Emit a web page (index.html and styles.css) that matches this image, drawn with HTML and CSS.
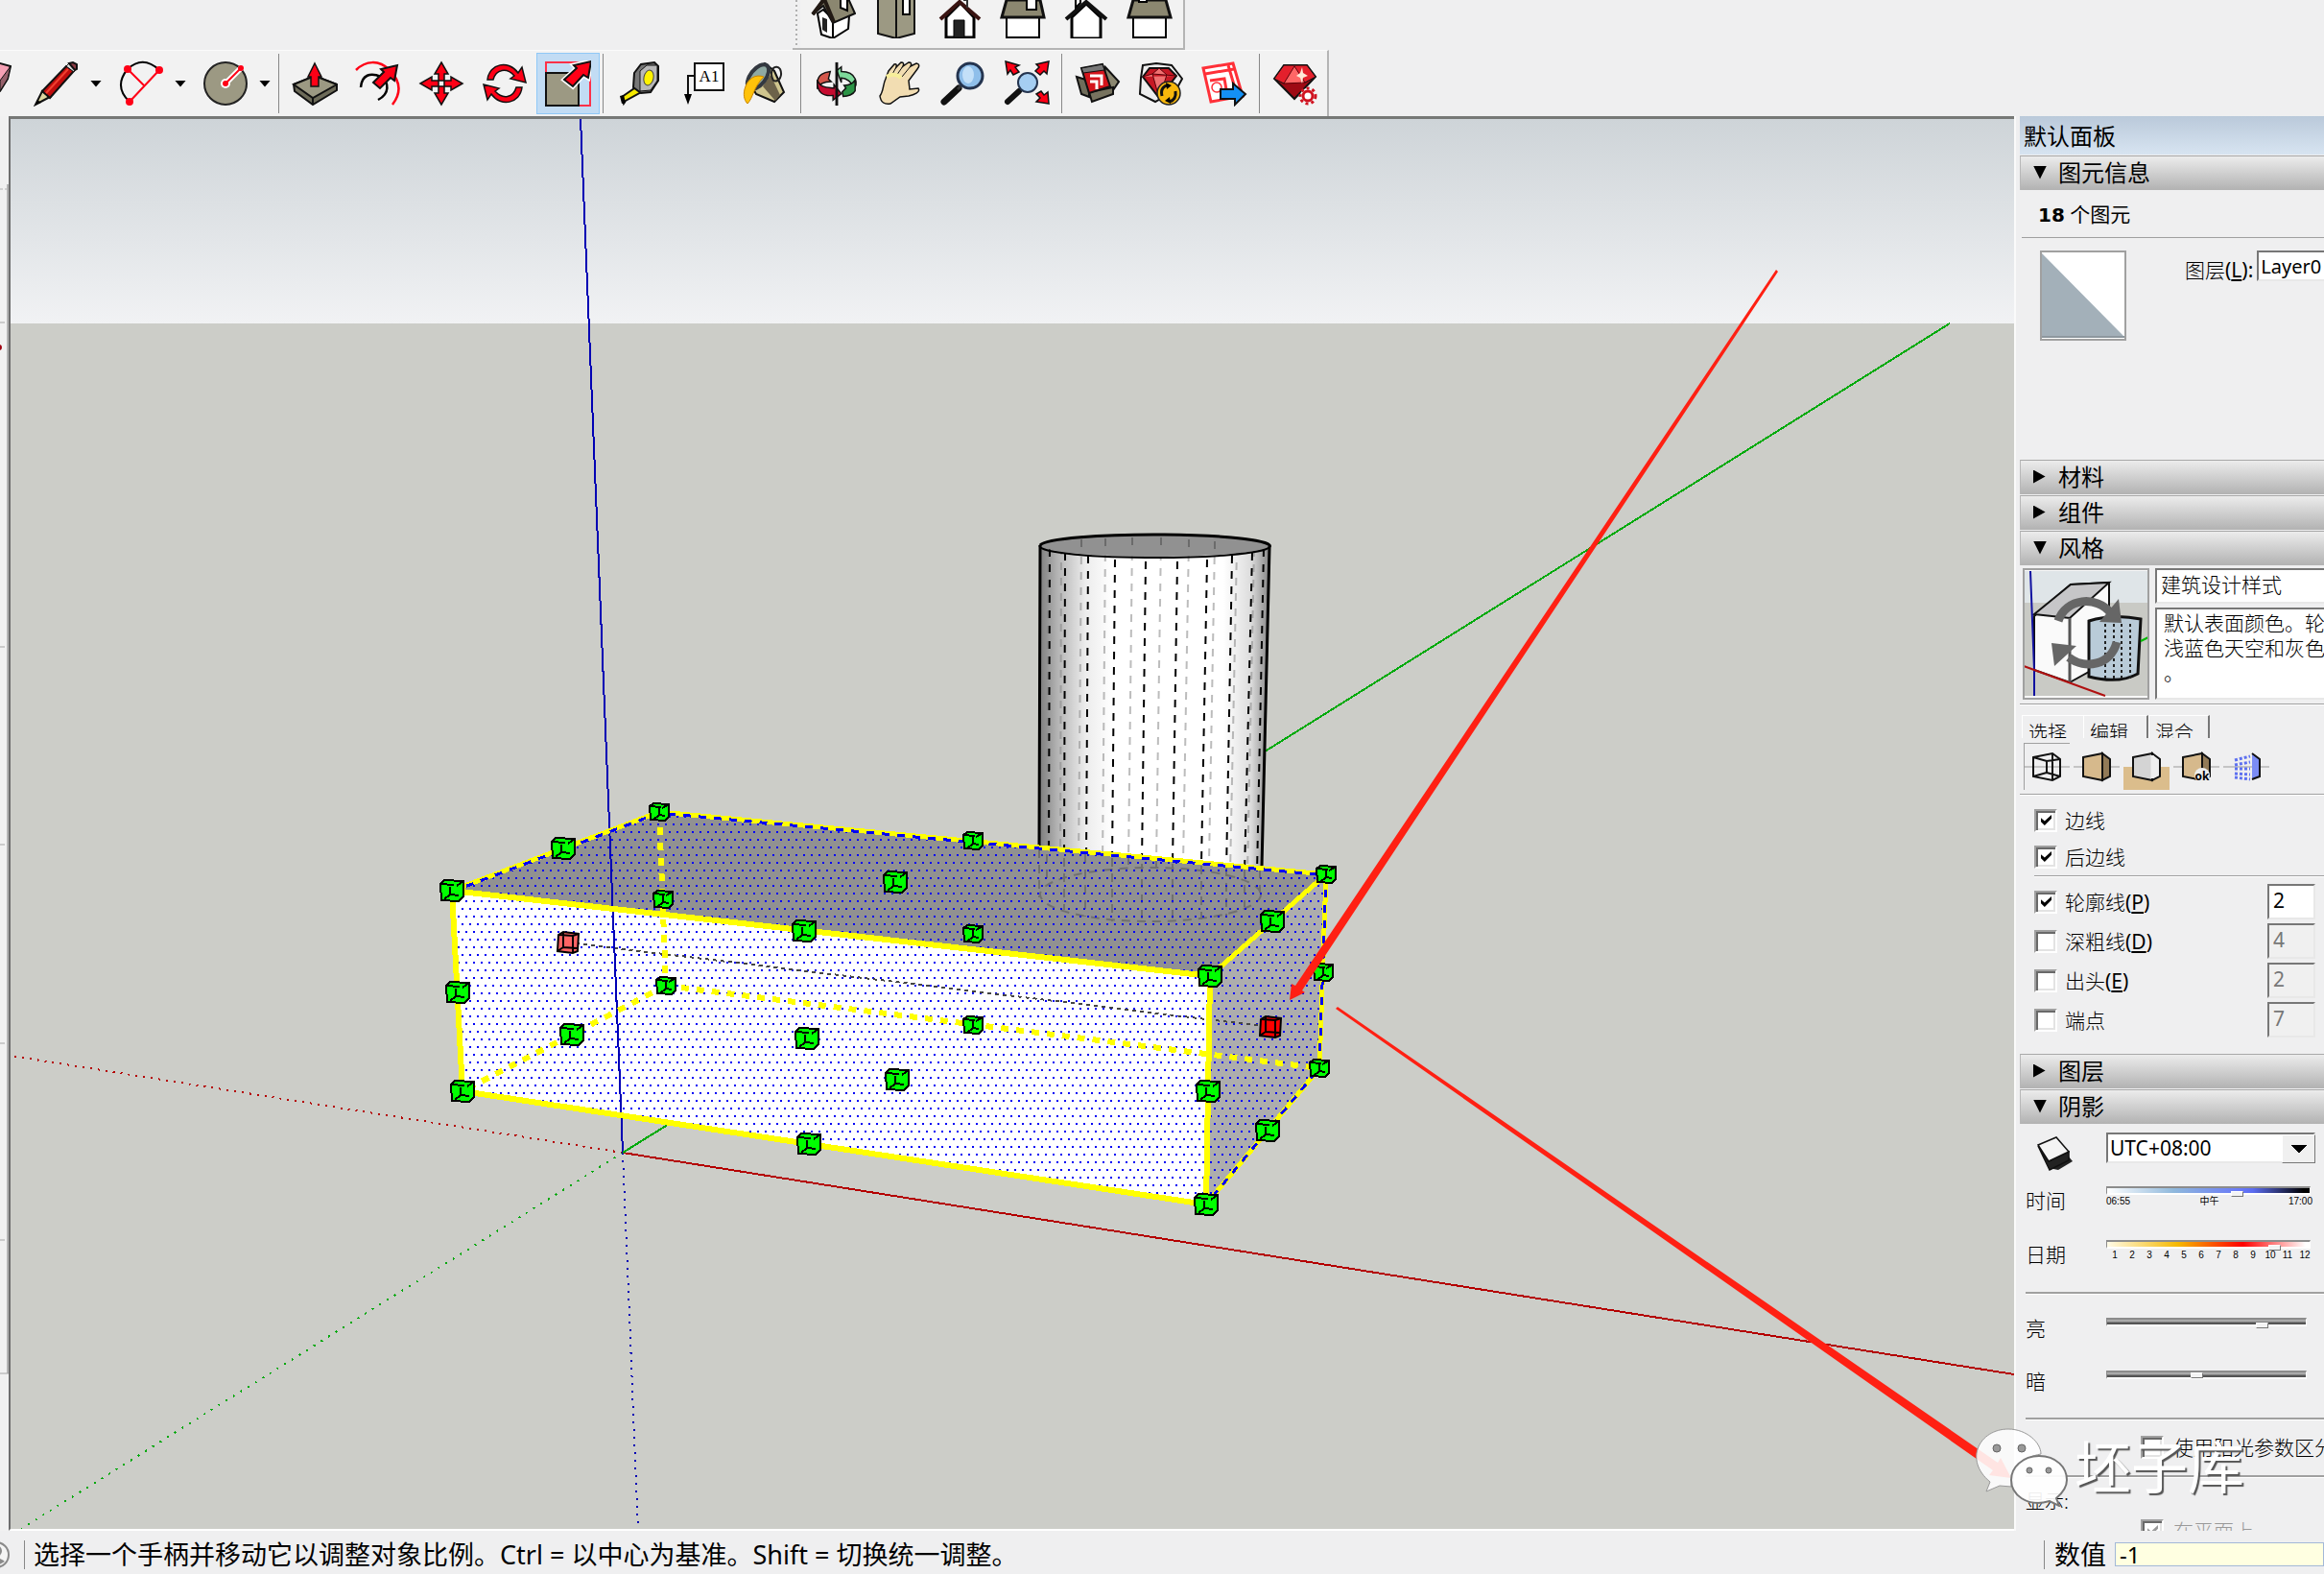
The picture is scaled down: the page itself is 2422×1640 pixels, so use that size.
FILE: index.html
```html
<!DOCTYPE html>
<html lang="zh-CN">
<head>
<meta charset="utf-8">
<title>SketchUp</title>
<link rel="stylesheet" href="styles.css">
</head>
<body>
<div class="app">
<header class="toolbars">
  <div class="bar bar-views">
    <button class="tool" aria-label="等轴"><svg viewBox="844 -10 48 48"><path d="M852 12L856 34L868 38V18L858 8Z" fill="#fff" stroke="#000" stroke-width="2"/><path d="M868 19L885 14L884 28L868 38Z" fill="#fff" stroke="#000" stroke-width="2"/><path d="M857 16l5 2v14l-5-3z" fill="#222"/><path d="M847 13L860-6L882-8L891 12L868 22L858 4Z" fill="#8b8770" stroke="#111" stroke-width="2"/><path d="M847 13L859-3L869 21" fill="none" stroke="#221a14" stroke-width="4"/><path d="M876-8v14l7 3v-16z" fill="#fff" stroke="#000" stroke-width="2"/></svg></button>
    <button class="tool" aria-label="俯视图"><svg viewBox="910 -10 48 48"><path d="M915-10V33L934 38L953 33V-10Z" fill="#9c9983" stroke="#111" stroke-width="2"/><path d="M934-10V38" stroke="#111" stroke-width="2"/><path d="M941-6H948V13H941Z" fill="#fff" stroke="#000" stroke-width="2"/></svg></button>
    <button class="tool" aria-label="前视图"><svg viewBox="976 -10 48 48"><path d="M986 16V37H1015V16L1001 1Z" fill="#fff" stroke="#000" stroke-width="3"/><path d="M980 18L1000 0L1021 18" fill="none" stroke="#3a1412" stroke-width="4"/><path d="M994 19H1005V37H994Z" fill="#222" stroke="#000"/><path d="M1004-2h4v8" fill="none" stroke="#333" stroke-width="2"/></svg></button>
    <button class="tool" aria-label="右视图"><svg viewBox="1042 -10 48 48"><path d="M1049 16H1083V37H1049Z" fill="#fff" stroke="#000" stroke-width="2"/><path d="M1049-2H1084L1088 16H1044Z" fill="#8b8770" stroke="#111" stroke-width="3"/><path d="M1070-9H1080V8H1070Z" fill="#fff" stroke="#000" stroke-width="2"/></svg></button>
    <button class="tool" aria-label="后视图"><svg viewBox="1108 -10 48 48"><path d="M1117 16V38H1147V16L1132 2Z" fill="#fff" stroke="#000" stroke-width="3"/><path d="M1111 18L1132 0L1153 18" fill="none" stroke="#111" stroke-width="4"/><path d="M1121-8v14l5-5v-10" fill="#fff" stroke="#000" stroke-width="2"/></svg></button>
    <button class="tool" aria-label="左视图"><svg viewBox="1174 -10 48 48"><path d="M1181 16H1215V37H1181Z" fill="#fff" stroke="#000" stroke-width="2"/><path d="M1181-2H1215L1220 16H1176Z" fill="#8b8770" stroke="#111" stroke-width="3"/><path d="M1187-9H1195V0H1187Z" fill="#fff" stroke="#000" stroke-width="2"/></svg></button>
  </div>
  <div class="bar bar-main">
    <button class="tool eraser" aria-label="擦除"><svg viewBox="-36 63 48 48"><path d="M-20 90L-4 65L11 69L8 82L0 95L-18 104Z" fill="#f6a1b5" stroke="#111" stroke-width="2"/><path d="M11 69L8 82L0 95V84Z" fill="#96606b" stroke="#111"/></svg></button>
    <button class="tool" aria-label="直线"><svg viewBox="35 63 48 48"><path d="M37 109L44 95L52 101Z" fill="#ddd6a0" stroke="#111" stroke-width="2"/><path d="M37 109l2-5 4 3z"/><path d="M44 95L69 69L77 74L52 102Z" fill="#c00d0d" stroke="#111" stroke-width="2"/><path d="M48 97L71 72" stroke="#f04030" stroke-width="2"/><path d="M69 69l3-3 7 6-2 3z" fill="#ddd" stroke="#111"/><path d="M72 66l4-1 4 2v5l-2 1z" fill="#8d3b44" stroke="#111" stroke-width="2"/></svg></button><button class="more" aria-label="直线选项"></button>
    <button class="tool" aria-label="圆弧"><svg viewBox="123 63 48 48"><path d="M133 72Q149 57 166 73M133 72Q118 90 135 106" fill="none" stroke="#000" stroke-width="2"/><path d="M133 72L150 89M166 73L135 106" stroke="#ff0016" stroke-width="2"/><g fill="#ff0016"><circle cx="133" cy="72" r="4"/><circle cx="166" cy="73" r="4"/><circle cx="135" cy="106" r="4"/></g></svg></button><button class="more" aria-label="圆弧选项"></button>
    <button class="tool" aria-label="圆"><svg viewBox="210 63 48 48"><circle cx="234" cy="87" r="22" fill="#9c9983" stroke="#222" stroke-width="2"/><path d="M234 87L250 71" stroke="#fff" stroke-width="6"/><circle cx="234" cy="87" r="5" fill="#fff"/><path d="M234 87L250 71" stroke="#ff0016" stroke-width="2"/><circle cx="234" cy="87" r="3" fill="#ff0016"/><circle cx="250" cy="71" r="3" fill="#ff0016"/></svg></button><button class="more" aria-label="圆选项"></button>
    <span class="sep narrow"></span>
    <button class="tool" aria-label="推拉"><svg viewBox="303 63 48 48"><path d="M305 88L327 79L350 88V94L325 109L306 95Z" fill="#6d6b59" stroke="#111" stroke-width="2"/><path d="M305 88L327 79L350 88L325 102Z" fill="#9c9983" stroke="#111" stroke-width="2"/><path d="M325 102v7" stroke="#111" stroke-width="2"/><path d="M327 66L334 80H331V90H323V80H320Z" fill="#ff0016" stroke="#111" stroke-width="1.500"/></svg></button>
    <button class="tool" aria-label="偏移"><svg viewBox="370 63 48 48"><path d="M371 73C381 63 395 62 406 73C417 84 419 96 409 109" fill="none" stroke="#ff0016" stroke-width="2.500"/><path d="M376 91C377 78 386 75 397 80C406 86 406 98 394 104" fill="none" stroke="#000" stroke-width="2.500"/><path d="M414 68L411 84L407 81L396 92L389 86L400 75L397 72Z" fill="#ff0016" stroke="#111" stroke-width="2"/></svg></button>
    <button class="tool" aria-label="移动"><svg viewBox="436 63 48 48"><g fill="#ff0016" stroke="#111" stroke-width="1.500"><path id="mv" d="M460 65L467 77H463V84H457V77H453Z"/><use href="#mv" transform="rotate(90 460 87)"/><use href="#mv" transform="rotate(180 460 87)"/><use href="#mv" transform="rotate(270 460 87)"/></g></svg></button>
    <button class="tool" aria-label="旋转"><svg viewBox="502 63 48 48"><g fill="#ff0016" stroke="#111" stroke-width="1.500"><path id="rt" d="M508 83C510 66 530 62 540 76L544 70L548 86L532 82L536 79C528 70 517 72 514 83Z"/><use href="#rt" transform="rotate(180 526 87)"/></g></svg></button>
    <button class="tool active" aria-label="缩放" aria-pressed="true"><svg viewBox="571 63 48 48"><path d="M572 65H618V110H572Z" fill="none" stroke="#ff3048" stroke-width="2"/><path d="M572 76H606V110H572Z" fill="#9c9983" stroke="#111" stroke-width="2"/><path d="M619 64L616 81L611 78L600 90L591 83L604 71L601 68Z" fill="#ff0016" stroke="#fff" stroke-width="5"/><path d="M619 64L616 81L611 78L600 90L591 83L604 71L601 68Z" fill="#ff0016" stroke="#111" stroke-width="2"/></svg></button>
    <span class="sep"></span>
    <button class="tool" aria-label="卷尺工具"><svg viewBox="643 63 48 48"><path d="M649 101L665 90L671 95L653 105L651 108Z" fill="#f5e900" stroke="#111" stroke-width="2"/><path d="M647 100l4-1 2 8-4 1z"/><path d="M662 76L669 67L683 65L687 69V84L679 96L669 97L661 91Z" fill="#777" stroke="#111" stroke-width="2"/><path d="M668 74L675 68L686 68V84L679 94L668 95Z" fill="#b8b8b8" stroke="#111"/><ellipse cx="677" cy="81" rx="5" ry="8" fill="#fff200" stroke="#444" transform="rotate(12 677 81)"/></svg></button>
    <button class="tool" aria-label="文字"><svg viewBox="709 63 48 48"><path d="M725 66H755V94H725Z" fill="#fff" stroke="#111" stroke-width="2"/><path d="M725 79H718V100" fill="none" stroke="#111" stroke-width="2"/><path d="M714 98H722L718 109Z"/><text x="740" y="85" text-anchor="middle" class="glyph">A1</text></svg></button>
    <button class="tool" aria-label="材质"><svg viewBox="774 63 48 48"><path d="M779 82L797 66L807 74L817 96L807 106L788 98Z" fill="#cfc58e" stroke="#111" stroke-width="2"/><path d="M803 78L813 99L808 105L795 90Z" fill="#6c624a"/><ellipse cx="790" cy="80" rx="8" ry="15" transform="rotate(38 790 80)" fill="#8fa9a2" stroke="#333840" stroke-width="4"/><path d="M806 84C800 72 809 66 813 72C816 79 812 86 806 84" fill="none" stroke="#222" stroke-width="2"/><path d="M796 80C788 77 779 81 776 93C774 101 777 106 779 108C785 102 785 91 796 80Z" fill="#ffc20a" stroke="#c98500"/></svg></button>
    <span class="sep"></span>
    <button class="tool" aria-label="环绕观察"><svg viewBox="848 61 48 50"><path d="M872 72L877 68V73C894 73 896 88 890 92C889 84 882 80 877 80V85Z" fill="#7dd99a" stroke="#111" stroke-width="1.500"/><path d="M892 82V94C890 98 884 100 879 100L878 95L882 91L880 88C886 88 890 86 892 82Z" fill="#2b9446" stroke="#111" stroke-width="1.500"/><path d="M851 84C852 76 858 74 865 73L863 81L866 84C858 84 853 86 851 92Z" fill="#d4574b" stroke="#111" stroke-width="1.500"/><path d="M851 82C854 91 862 90 869 91V87L877 97L868 104V99C857 100 850 96 851 82Z" fill="#c60c30" stroke="#111" stroke-width="1.500"/><path d="M872 63V110" stroke="#111" stroke-width="3"/></svg></button>
    <button class="tool" aria-label="平移"><svg viewBox="914 63 48 48"><path d="M917 100C921 95 920 88 923 82L926 74L932 67Q935 66 934 70L939 65Q943 65 941 69L947 65Q951 65 949 69L955 66Q960 67 956 72L947 84L948 93L957 92C960 96 952 99 947 100L938 101L928 108C922 109 918 107 917 100Z" fill="#f2ddb2" stroke="#111" stroke-width="1.500"/><path d="M934 70L929 79M941 69L934 79M949 69L940 80" stroke="#111" fill="none"/><path d="M924 80c5-3 11-3 15 1" stroke="#f7ee9a" stroke-width="4" fill="none"/></svg></button>
    <button class="tool" aria-label="缩放镜头"><svg viewBox="980 63 48 48"><path d="M984 106L999 92" stroke="#111" stroke-width="7" stroke-linecap="round"/><path d="M998 93L1003 88" stroke="#333" stroke-width="3"/><circle cx="1011" cy="79" r="13" fill="#8fbfea" stroke="#24344f" stroke-width="3"/><ellipse cx="1009" cy="78" rx="6" ry="9" fill="#c3e0f8"/></svg></button>
    <button class="tool" aria-label="充满视窗"><svg viewBox="1047 63 48 48"><path d="M1051 106L1063 95" stroke="#111" stroke-width="6" stroke-linecap="round"/><circle cx="1072" cy="86" r="10" fill="#a5cef2" stroke="#24344f" stroke-width="2"/><g fill="#ff0016" stroke="#111" stroke-width="1.500"><path d="M1049 64L1063 68L1059 70L1063 75L1057 78L1054 73L1051 77Z"/><path d="M1094 64L1092 77L1089 74L1085 78L1080 74L1084 70L1081 67Z"/><path d="M1094 108L1081 106L1085 102L1081 98L1086 95L1089 99L1093 96Z"/></g></svg></button>
    <span class="sep"></span>
    <button class="tool" aria-label="3D 模型库"><svg viewBox="1120 63 48 48"><path d="M1122 80L1135 84V101L1127 98Z" fill="#6f6c5a" stroke="#111" stroke-width="2"/><path d="M1152 70L1166 85L1158 97L1148 92Z" fill="#8b8770" stroke="#111" stroke-width="2"/><path d="M1135 96L1160 91V98L1138 106Z" fill="#77735f" stroke="#111" stroke-width="2"/><path d="M1127 71L1149 67L1157 90L1135 97Z" fill="#d4141c" stroke="#111" stroke-width="2"/><path d="M1127 71l22-4 2 6-22 3z" fill="#777" stroke="#111"/><path d="M1136 79h12v10M1136 85h7v8" fill="none" stroke="#fff" stroke-width="3"/></svg></button>
    <button class="tool" aria-label="扩展程序库"><svg viewBox="1187 63 48 48"><path d="M1192 68l14-2 16 2 11 14-6 11-22 13-16-8 1-17z" fill="#eee" stroke="#111" stroke-width="2"/><path d="M1192 80L1199 71H1219L1227 79L1209 102Z" fill="#c71824" stroke="#111" stroke-width="2"/><path d="M1192 80L1202 77L1227 79M1202 77L1209 102L1217 78L1209 71Z" fill="#f07070" stroke="#5b0008"/><circle cx="1219" cy="97" r="12" fill="#f8b70b" stroke="#222" stroke-width="1.500"/><path d="M1212 100c-2-8 3-11 6-11M1226 95c1 7-3 10-6 11" fill="none" stroke="#111" stroke-width="3"/><path d="M1216 86l6 3-5 4zM1221 108l-6-3 5-4z"/></svg></button>
    <button class="tool" aria-label="LayOut"><svg viewBox="1253 63 48 48"><path d="M1255 71L1286 66L1296 100L1263 106Z" fill="#fff" stroke="#ff3038" stroke-width="3"/><path d="M1257 77L1287 72M1281 68L1291 102M1262 84L1277 82L1280 99" fill="none" stroke="#ff3038" stroke-width="3"/><circle cx="1269" cy="91" r="5" fill="none" stroke="#ff3038" stroke-width="1.500"/><path d="M1273 93H1286V87L1299 98L1288 109V103H1273Z" fill="#1490f5" stroke="#111" stroke-width="2"/></svg></button>
    <span class="sep"></span>
    <button class="tool" aria-label="扩展程序管理器"><svg viewBox="1326 63 48 48"><path d="M1328 82L1338 68H1362L1371 80L1349 103Z" fill="#9e0a14" stroke="#111" stroke-width="2"/><path d="M1328 82L1338 68H1362L1371 80L1360 86L1349 81L1338 87Z" fill="#e4202c" stroke="#111"/><path d="M1338 87L1349 69L1360 86Z" fill="#f66" stroke="#5b0008"/><path d="M1357 70l1 6 5 3-5 2-1 6-2-6-4-2 4-3z" fill="#ffe9d8"/><circle cx="1363" cy="100" r="8" fill="#f1f1f1"/><circle cx="1363" cy="100" r="5" fill="#fff" stroke="#d01320" stroke-width="3"/><circle cx="1363" cy="100" r="8" fill="none" stroke="#d01320" stroke-width="3" stroke-dasharray="3 3"/></svg></button>
  </div>
</header>

<main class="work">
<aside class="side-strip"><svg viewBox="0 121 9 1474" preserveAspectRatio="xMinYMin slice"><path d="M0 197H7" stroke="#b0b0b0" stroke-dasharray="3 2"/><path d="M8 192V1431" stroke="#b4b4b4" stroke-width="2"/><path d="M0 1431H9M0 336H5M0 674H5M0 880H5M0 1087H5M0 1292H5" stroke="#a5a5a5"/><circle cx="-1" cy="362" r="3" fill="#a00010"/></svg></aside>

<section class="viewport" aria-label="模型视图">
<svg class="scene" viewBox="11 124 2088 1469" preserveAspectRatio="xMinYMin slice">
<defs>
<linearGradient id="sky" x1="0" y1="0" x2="0" y2="1"><stop offset="0" stop-color="#ced4d8"/><stop offset="1" stop-color="#f1f2f4"/></linearGradient>
<linearGradient id="cyl" x1="0" x2="1"><stop offset="0" stop-color="#7c7c7c"/><stop offset=".08" stop-color="#b4b4b4"/><stop offset=".2" stop-color="#ececec"/><stop offset=".32" stop-color="#fff"/><stop offset=".8" stop-color="#fff"/><stop offset=".92" stop-color="#dcdcdc"/><stop offset="1" stop-color="#858585"/></linearGradient>
<pattern id="dots" width="8" height="16" patternUnits="userSpaceOnUse"><path d="M1 2h2v2h-2zM5 10h2v2h-2z" fill="#0000f5"/></pattern>
<g id="cube"><path d="M-12-7L-8-11L12-10V6L7 11L-11 10Z" stroke="#000" stroke-width="2"/><path d="M-12-7L2-6M-2-4V4L7 5M-2 4L-8 9M5-5L12-10" fill="none" stroke="#000" stroke-width="2"/></g>
<g id="cube-s"><path d="M-10-6L-6-9L10-8V5L6 9L-9 8Z" stroke="#000" stroke-width="2"/><path d="M-10-6L2-5M0-4V3L6 4M0 3L-6 8M3-4L10-8" fill="none" stroke="#000" stroke-width="2"/></g>
<g id="cube-r"><path d="M-10-8L-5-11L11-9L10 9L5 11L-11 9Z" stroke="#000" stroke-width="2"/><path d="M-10-8L5-7L11-9M5-7V11M-5-11V5L10 6M-5 5L-11 9" fill="none" stroke="#000" stroke-width="2"/></g>
</defs>
<path d="M11 124H2099V337H11Z" fill="url(#sky)"/>
<path d="M11 337H2099V1593H11Z" fill="#cccdc8"/>
<g fill="none" stroke-width="2" shape-rendering="crispEdges">
<path d="M649 1201L2099 1432" stroke="#b40000"/>
<path d="M649 1201L2032 337" stroke="#00aa0c"/>
<path d="M649 1201L11 1100" stroke="#b40000" stroke-dasharray="2 6"/>
<path d="M649 1201L22 1593" stroke="#00a80c" stroke-dasharray="2 7"/>
<path d="M649 1201L665 1593" stroke="#0000b4" stroke-dasharray="2 6"/>
</g>
<path d="M1084 568L1083 932L1200 961L1315 932L1323 568Z" fill="url(#cyl)"/>
<g fill="none" stroke-width="2" stroke-dasharray="8 8">
<path stroke="#858585" stroke-opacity=".55" d="M1092 572L1091 900M1106 570L1105 900M1127 564L1124 900M1152 561L1149 900M1180 560L1176 900M1210 560L1205 900M1239 561L1233 900M1266 564L1260 900M1289 570L1282 910M1307 572L1300 910"/>
<path stroke="#000" d="M1094 572L1093 900M1110 576L1109 900M1134 579L1132 900M1162 583L1159 900M1194 585L1190 900M1227 585L1222 900M1258 583L1252 900M1284 579L1278 910M1305 576L1297 910M1317 572L1310 910"/>
</g>
<ellipse cx="1204" cy="568" rx="119" ry="12" fill="#919191"/>
<path d="M1127 562v8M1152 561v8M1180 560v8M1210 560v8M1239 562v8M1266 564v8" stroke="#6b6b6b" stroke-width="2"/>
<path d="M1084 568A119 12 0 0 1 1323 570L1315 903M1084 568L1083 882" fill="none" stroke="#000" stroke-width="3"/>
<path d="M1084 568A119 12 0 0 0 1323 570" fill="none" stroke="#000" stroke-width="2"/>

<path d="M471 928L687 846L1382 911L1261 1017Z" fill="#919191"/>
<path d="M471 928L1261 1017L1257 1255L482 1137Z" fill="#fff"/>
<path d="M1261 1017L1382 911L1375 1113L1257 1255Z" fill="#adadad"/>
<g fill="none" stroke="#707070" stroke-width="2" stroke-dasharray="9 7">
<ellipse cx="1199" cy="932" rx="115" ry="28"/><path d="M1083 885V935M1091 890V920M1109 894V948M1131 890V955M1159 894V960M1190 900V960M1222 900V960M1252 902V958M1278 904V954M1297 906V945M1313 906V930M1205 894V904M1176 892V905"/></g>
<path d="M471 928L687 846L1382 911L1375 1113L1257 1255L482 1137Z" fill="url(#dots)" shape-rendering="crispEdges"/>
<g fill="none" shape-rendering="crispEdges">
<path d="M592 982L1324 1070" stroke="#444" stroke-width="2" stroke-dasharray="4 4"/>
<path d="M605 124L649 1201" stroke="#0000b4" stroke-width="2"/>
<path d="M649 1201L699 1170" stroke="#00aa0c" stroke-width="2"/>
<g stroke="#ff0" stroke-width="6">
<path stroke-dasharray="8 8" d="M687 846L694 1027M694 1027L1375 1113M694 1027L482 1137"/>
<path d="M471 928L687 846L1382 911L1375 1113L1257 1255" stroke-width="5"/>
<path d="M471 928L1261 1017L1257 1255L482 1137Z"/>
<path d="M1261 1017L1382 911" stroke-width="5"/>
</g>
<path d="M471 929L687 847L1382 912L1375 1113L1257 1255" stroke="#0000f5" stroke-width="3" stroke-dasharray="8 8"/>
</g>
<g fill="#0f0" shape-rendering="crispEdges">
<use href="#cube" x="471" y="928"/><use href="#cube" x="1261" y="1017"/><use href="#cube" x="482" y="1137"/><use href="#cube" x="1257" y="1255"/><use href="#cube" x="477" y="1034"/><use href="#cube" x="838" y="970"/><use href="#cube" x="841" y="1082"/><use href="#cube" x="843" y="1192"/><use href="#cube" x="1259" y="1137"/>
<use href="#cube" x="933" y="919"/><use href="#cube" x="935" y="1125"/><use href="#cube" x="1326" y="960"/><use href="#cube" x="1321" y="1178"/><use href="#cube" x="587" y="884"/><use href="#cube" x="596" y="1078"/>
<use href="#cube-s" x="687" y="846"/><use href="#cube-s" x="691" y="937"/><use href="#cube-s" x="694" y="1027"/><use href="#cube-s" x="1014" y="876"/><use href="#cube-s" x="1014" y="973"/><use href="#cube-s" x="1014" y="1068"/><use href="#cube-s" x="1382" y="911"/><use href="#cube-s" x="1379" y="1013"/><use href="#cube-s" x="1375" y="1113"/>
</g>
<use href="#cube-r" x="592" y="982" fill="#ff6464"/>
<use href="#cube-r" x="1324" y="1070" fill="#f00"/>
<path d="M1851 281L1853 283L1357 1032L1360 1034L1344 1042L1346 1025L1350 1027Z" fill="#ff2013"/>
<path d="M1392 1051L1394 1049L2082 1524L2085 1519L2096 1540L2073 1537L2077 1532Z" fill="#ff2013"/>
</svg>
</section>

<aside class="tray">
  <h1 class="tray-title">默认面板</h1>
  <button class="head open">图元信息</button>
  <section class="entity">
    <p class="count"><b>18</b> 个图元</p>
    <div class="entity-row">
      <svg class="swatch" viewBox="0 0 90 94"><path d="M0 0H90V94H0Z" fill="#fff"/><path d="M1 2V90H88Z" fill="#a3b0b9"/><path d="M1 90H89" stroke="#8d979e" stroke-width="2"/><path d="M1 1H89V93H1Z" fill="none" stroke="#a0a0a0" stroke-width="2"/></svg>
      <label for="layer">图层<span class="key">(<u>L</u>):</span></label><input id="layer" class="field layer" value="Layer0">
    </div>
  </section>
  <button class="head">材料</button>
  <button class="head">组件</button>
  <button class="head open">风格</button>
  <section class="styles">
    <div class="style-top">
      <svg class="thumb" viewBox="0 0 132 137"><path d="M0 0H132V137H0Z" fill="#f8f8f8"/><path d="M1 3H131V36H1Z" fill="#dfe5e8"/><path d="M1 36H131V133H1Z" fill="#c9cac5"/><path d="M12 50L50 17L90 15V60L76 104L49 119L12 106Z" fill="#fafafa" stroke="#111" stroke-width="2"/><path d="M12 48L50 17L90 15L49 52Z" fill="#c6c6c8" stroke="#111" stroke-width="2"/><path d="M49 52V119" stroke="#555" stroke-width="3"/><path d="M69 55Q94 47 123 53L120 110Q100 121 69 113Z" fill="#b9cbd8" stroke="#111" stroke-width="3"/><path d="M86 58V115M95 58V115M103 58V115M112 58V115" stroke="#222" stroke-width="2" stroke-dasharray="3 3"/><path d="M8 3L12 106L12 133" stroke="#1111a0" stroke-width="2" fill="none"/><path d="M1 102L12 106L86 133" stroke="#b01010" stroke-width="2" fill="none"/><path d="M123 76L131 72" stroke="#0b0" stroke-width="2"/><path d="M37 55C45 31 77 28 92 47" fill="none" stroke="#666" stroke-width="9"/><path d="M100 32L103 57L80 56Z" fill="#666"/><path d="M98 77C92 101 65 106 48 93" fill="none" stroke="#666" stroke-width="9"/><path d="M30 78L33 102L56 81Z" fill="#666"/><path d="M1 1H131V136H1Z" fill="none" stroke="#a0a0a0" stroke-width="2"/></svg>
      <div class="style-text"><input class="field name" aria-label="样式名称" value="建筑设计样式"><textarea class="field note" aria-label="样式说明" wrap="off">默认表面颜色。轮廓
浅蓝色天空和灰色地
。</textarea></div>
    </div>
    <hr class="rule wide">
    <div class="tabs"><button>选择</button><button class="on">编辑</button><button>混合</button></div>
    <div class="modes">
      <button class="pressed" aria-label="边线设置"><svg viewBox="0 0 48 48"><path d="M0 24H48" stroke="#999"/><path d="M10 14L30 10L38 16V34L30 38L10 34ZM10 14V34M10 14L24 18L38 16M30 10V38M24 18V30L10 34M24 30L38 34" fill="none" stroke="#111" stroke-width="2"/></svg></button>
      <button aria-label="平面设置"><svg viewBox="0 0 48 48"><path d="M0 24H48" stroke="#999"/><path d="M10 14L30 10V38L10 34Z" fill="#d6b98c" stroke="#111" stroke-width="2"/><path d="M30 10L38 16V34L30 38Z" fill="#927a57" stroke="#111" stroke-width="2"/></svg></button>
      <button aria-label="背景设置"><svg viewBox="0 0 48 48"><path d="M0 24H48V48H0Z" fill="#dbbd8c"/><path d="M10 14L30 10V38L10 34Z" fill="#d4d4d4" stroke="#111" stroke-width="2"/><path d="M30 10L38 16V34L30 38Z" fill="#eee" stroke="#111" stroke-width="2"/><path d="M30 12V36" stroke="#eee" stroke-width="3"/></svg></button>
      <button aria-label="水印设置"><svg viewBox="0 0 48 48"><path d="M0 24H48" stroke="#999"/><path d="M10 14L30 10V38L10 34Z" fill="#d6b98c" stroke="#111" stroke-width="2"/><path d="M30 10L38 16V34L30 38Z" fill="#927a57" stroke="#111" stroke-width="2"/><circle cx="30" cy="33" r="8" fill="#eee"/><text x="30" y="38" text-anchor="middle" class="ok">ok</text></svg></button>
      <button aria-label="建模设置"><svg viewBox="0 0 48 48"><path d="M0 24H48" stroke="#999"/><path d="M30 10L38 16V34L30 37Z" fill="#7b8cf5"/><path d="M30 10L38 16V34L30 37" fill="none" stroke="#111" stroke-width="2"/><path d="M12 17L28 13M12 22L28 19M12 26H28M12 31L28 32M12 35L28 37" stroke="#5d70f0" stroke-width="3" stroke-dasharray="3 2"/></svg></button>
    </div>
    <hr class="rule">
    <div class="checks">
      <label><input type="checkbox" checked>边线</label>
      <label><input type="checkbox" checked>后边线</label>
    </div>
    <hr class="rule inset">
    <div class="checks numbered">
      <label><input type="checkbox" checked><span>轮廓线<span class="key">(<u>P</u>)</span></span></label><input class="field num" aria-label="轮廓线宽度" value="2">
      <label><input type="checkbox"><span>深粗线<span class="key">(<u>D</u>)</span></span></label><input class="field num" aria-label="深粗线宽度" value="4" disabled>
      <label><input type="checkbox"><span>出头<span class="key">(<u>E</u>)</span></span></label><input class="field num" aria-label="出头长度" value="2" disabled>
      <label><input type="checkbox"><span>端点</span></label><input class="field num" aria-label="端点长度" value="7" disabled>
    </div>
    <hr class="rule end">
  </section>
  <button class="head">图层</button>
  <button class="head open">阴影</button>
  <section class="shadows">
    <div class="zone">
      <button class="shade" aria-label="显示阴影"><svg viewBox="0 0 38 38"><path d="M12 34L32 21L37 27L22 36Z" fill="#222"/><path d="M1 11L12 27L33 17V26L13 36Z" fill="#222" stroke="#111" stroke-width="1.500"/><path d="M1 10L20 2L33 17L12 27Z" fill="#f4f4f4" stroke="#111" stroke-width="1.500"/></svg></button>
      <select class="field utc" aria-label="时区"><option>UTC+08:00</option></select>
    </div>
    <div class="slide"><label for="time">时间</label><div><input id="time" type="range" class="sky-track" min="0" max="100" value="65"><div class="marks"><span>06:55</span><span>中午</span><span>17:00</span></div></div></div>
    <div class="slide"><label for="date">日期</label><div><input id="date" type="range" class="warm-track" min="0" max="100" value="85"><div class="marks months"><span>1</span><span>2</span><span>3</span><span>4</span><span>5</span><span>6</span><span>7</span><span>8</span><span>9</span><span>10</span><span>11</span><span>12</span></div></div></div>
    <hr class="rule groove">
    <div class="slide plain"><label for="light">亮</label><div><input id="light" type="range" min="0" max="100" value="80"></div></div>
    <div class="slide plain"><label for="dark">暗</label><div><input id="dark" type="range" class="raised" min="0" max="100" value="45"></div></div>
    <hr class="rule groove">
    <label class="sun"><input type="checkbox">使用阳光参数区分明暗面</label>
    <hr class="rule groove">
    <p class="show">显示:</p>
    <label class="sun faded"><input type="checkbox" checked disabled>在平面上</label>
  </section>
</aside>

<div class="watermark"><svg viewBox="2058 1485 100 84"><path d="M2093 1488C2112 1488 2127 1502 2127 1514C2108 1517 2096 1530 2096 1548L2084 1547L2070 1553L2074 1543C2046 1520 2063 1488 2093 1488Z" fill="#fff" fill-opacity=".88" stroke="#999"/><path d="M2125 1516C2143 1516 2154 1528 2154 1541C2154 1549 2149 1555 2143 1560L2146 1568L2136 1563C2112 1570 2096 1556 2096 1541C2096 1528 2108 1516 2125 1516Z" fill="#fff" fill-opacity=".92" stroke="#777" stroke-width="2"/><g fill="#999" stroke="#666"><circle cx="2081" cy="1508" r="4"/><circle cx="2107" cy="1508" r="4"/><circle cx="2115" cy="1531" r="3"/><circle cx="2135" cy="1531" r="3"/></g></svg><span>坯子库</span></div>
</main>

<footer class="status">
  <svg class="user" viewBox="0 0 14 30"><circle cx="-4" cy="15" r="13" fill="#f4f4f4" stroke="#8a8a8a" stroke-width="2"/><circle cx="-4" cy="11" r="6" fill="#8a8a8a"/><path d="M-14 23Q-4 14 5 22L-4 27Z" fill="#8a8a8a"/></svg>
  <p class="hint">选择一个手柄并移动它以调整对象比例。Ctrl = 以中心为基准。Shift = 切换统一调整。</p>
  <label for="vcb">数值</label><input id="vcb" value="-1">
</footer>
</div>
</body>
</html>
```
FILE: styles.css
```css
* { box-sizing: border-box; }
body {
  margin: 0;
  background: #efeff0;
  color: #000;
  font: 300 21px/26px "Noto Sans", "Noto Sans CJK SC", sans-serif;
  overflow: hidden;
}
button, input, select, textarea { font: inherit; color: inherit; margin: 0; }
button { border: 0; padding: 0; background: none; }
p, h1 { margin: 0; }
.app { display: grid; grid-template-rows: 121px minmax(0, 1fr) 45px; height: 100vh; }

/* toolbars */
.toolbars { display: flex; flex-direction: column; align-items: flex-start; overflow: hidden; }
.bar { display: flex; background: #f2f2f2; }
.bar-views {
  height: 52px;
  margin-left: 826px;
  padding: 0 2px 0 9px;
  align-items: flex-start;
  border-right: 2px solid #b4b4b4;
  border-bottom: 2px solid #b4b4b4;
  background: linear-gradient(#f2f2f2, #f2f2f2) 8px 0 no-repeat, repeating-linear-gradient(#b0b0b0 0 2px, #f2f2f2 2px 5px) 3px 0 / 2px 100% no-repeat;
}
.bar-views .tool { height: 40px; align-items: flex-end; overflow: hidden; }
.bar-main { height: 69px; align-items: center; border-right: 2px solid #b4b4b4; border-top: 1px solid #fafafa; }
.tool { width: 66px; height: 64px; display: flex; align-items: center; justify-content: center; flex: none; }
.tool svg { width: 48px; height: 48px; flex: none; }
.tool.active { background: #c2dcf4; border: 1px solid #90c8f6; }
.eraser { width: 26px; justify-content: flex-end; padding-right: 14px; }
.more { width: 22px; height: 64px; flex: none; }
.more::before {
  content: "";
  display: block;
  width: 12px;
  height: 7px;
  margin-left: 2px;
  background: #000;
  clip-path: polygon(0 0, 100% 0, 50% 100%);
}
.sep { width: 8px; height: 62px; background: linear-gradient(#888, #888) 3px 0 / 1px 100% no-repeat; }
.sep.narrow { width: 5px; background-position-x: 0; }
.glyph { font: 17px "Liberation Serif", serif; }
.ok { font: 700 12px "Open Sans", sans-serif; }

/* work area */
.work { display: grid; grid-template-columns: 9px minmax(0, 1fr) 323px; position: relative; min-height: 0; }
.side-strip, .side-strip svg { display: block; width: 9px; height: 100%; overflow: hidden; background: #f1f1f1; }
.viewport { border-left: 2px solid #6e6e6e; border-top: 3px solid #767876; border-bottom: 2px solid #fff; min-height: 0; overflow: hidden; }
.scene { display: block; width: 100%; height: 100%; }
.tray {
  padding-left: 4px;
  border-left: 2px solid #fafafa;
  overflow: hidden;
  white-space: nowrap;
}
.tray-title { height: 40px; padding: 6px 4px; font-size: 24px; line-height: 30px; font-weight: 400; background: linear-gradient(#bac9da, #d7e4f1); }
.head {
  display: flex;
  align-items: center;
  width: 100%;
  height: 36px;
  margin-top: 1px;
  padding: 0 0 2px 13px;
  gap: 12px;
  font-size: 24px;
  line-height: 30px;
  font-weight: 400;
  border-top: 1px solid #a8a8a8;
  border-left: 1px solid #b8b8b8;
  background: linear-gradient(#ececec, #b2b2b2);
}
.head::before { content: ""; width: 14px; height: 14px; background: #000; clip-path: polygon(0 0, 90% 50%, 0 100%); }
.head.open::before { clip-path: polygon(0 0, 100% 0, 50% 100%); }
.rule { height: 2px; margin: 0; border: 0; border-top: 1px solid #a0a0a0; border-bottom: 1px solid #fff; }
.key { font-weight: 400; }
.field {
  border: 2px solid;
  border-color: #777 #e8e8e8 #e8e8e8 #777;
  border-radius: 0;
  background: #fff;
  padding: 0 4px;
  outline: 0;
}

/* entity info */
.entity { height: 280px; }
.count { height: 49px; padding: 12px 0 0 19px; font-weight: 400; }
.count b { font-family: "DejaVu Sans", sans-serif; font-weight: 700; font-size: 20px; }
.entity-row { display: flex; align-items: flex-start; margin-left: 2px; padding: 13px 0 0 19px; border-top: 1px solid #a0a0a0; }
.swatch { width: 90px; height: 94px; flex: none; }
.entity-row label { margin: 7px 4px 0 61px; }
.layer { width: 120px; height: 32px; padding: 0 2px; font-size: 20px; font-weight: 400; flex: none; }

/* styles */
.styles { height: 508px; }
.style-top { display: flex; gap: 6px; padding: 3px 0 0 3px; height: 144px; }
.thumb { width: 132px; height: 137px; flex: none; }
.style-text { display: flex; flex-direction: column; gap: 4px; }
.style-text .field { width: 220px; }
.name { height: 37px; padding-bottom: 5px; }
.note { height: 96px; padding: 1px 7px; line-height: 26px; resize: none; overflow: hidden; }
.tabs { display: flex; height: 24px; margin: 10px 0 5px 2px; overflow: hidden; align-items: flex-start; }
.tabs button { width: 64px; height: 34px; padding: 3px 0 0 6px; text-align: left; border-top: 1px solid #fff; border-left: 1px solid #fff; font-size: 20px; }
.tabs .on { width: 68px; }
.tabs .on, .tabs button:last-child { border-right: 2px solid #777; }
.modes { display: flex; gap: 4px; padding-left: 4px; height: 53px; }
.modes button { width: 48px; height: 49px; }
.modes svg { display: block; width: 48px; height: 48px; }
.modes .pressed { box-shadow: inset 1px 1px #a0a0a0; }
.checks { padding: 7px 0 0 15px; height: 83px; }
.checks label { display: flex; align-items: center; gap: 8px; height: 38px; }
.inset { margin-left: 15px; }
.numbered { display: grid; grid-template-columns: 243px 50px; grid-auto-rows: 41px; height: 176px; align-items: start; }
.num { width: 50px; height: 37px; font-weight: 400; padding-bottom: 4px; }
.num:disabled { background: #f0f0f0; color: #777; }
input[type="checkbox"] {
  appearance: none;
  width: 24px;
  height: 24px;
  flex: none;
  border: 2px solid;
  border-color: #a0a0a0 #fff #fff #a0a0a0;
  background: #fff;
  box-shadow: inset 2px 2px #696969, inset -2px -2px #e3e3e3;
}
input[type="checkbox"]:checked::before {
  content: "";
  display: block;
  width: 11px;
  height: 11px;
  margin: 4px 5px;
  background: #000;
  clip-path: polygon(0 30%, 35% 60%, 100% 0, 100% 35%, 35% 100%, 0 65%);
}
.end { margin-top: 8px; border-top: 2px solid #777; height: 3px; }

/* shadows */
.shadows { padding-left: 6px; }
.zone { position: relative; display: grid; grid-template-columns: 84px 218px; height: 52px; padding-top: 9px; }
.shade { width: 38px; height: 38px; margin: 3px 0 0 12px; }
.shade svg { width: 38px; height: 38px; }
.utc { appearance: none; height: 32px; font-weight: 400; line-height: 24px; padding: 0 2px; }
.zone::after {
  content: "";
  position: absolute;
  left: 267px;
  top: 11px;
  width: 33px;
  height: 28px;
  pointer-events: none;
  border: 1px solid;
  border-color: #fff #777 #777 #fff;
  background: conic-gradient(from -45deg at 50% 100%, #000 90deg, #f0f0f0 0) 50% 50% / 16px 8px no-repeat #f0f0f0;
}
.slide { display: grid; grid-template-columns: 84px 213px; height: 56px; }
.slide label { padding-top: 15px; }
.slide > div { padding-top: 13px; }
.plain { height: 55px; grid-template-columns: 84px 209px; }
.plain > div { padding-top: 17px; }
input[type="range"] {
  appearance: none;
  display: block;
  width: 100%;
  height: 9px;
  border: solid;
  border-width: 2px 1px 2px 1px;
  border-color: #8c8c8c #fff #fff #8c8c8c;
  background: linear-gradient(#aaa 0 2px, #555 3px);
}
input[type="range"]::-webkit-slider-thumb {
  appearance: none;
  width: 13px;
  height: 6px;
  margin-top: 7px;
  background: #f4f4f4;
  border: 1px solid;
  border-color: #fff #777 #777 #fff;
}
input.raised::-webkit-slider-thumb { margin-top: 0; }
input.sky-track { background: linear-gradient(90deg, #fff, #8fb8dc 33%, #6878f8 66%, #5b6cf0 72%, #000 97%); }
input.warm-track { background: linear-gradient(90deg, #fffbe8, #f5b800 35%, #f00 67%, #fff 98%); }
.marks { display: flex; justify-content: space-between; margin: 1px -2px 0 0; font: 10px/12px "Liberation Sans", "Noto Sans CJK SC", sans-serif; }
.months { display: grid; grid-template-columns: repeat(12, 18px); text-align: center; }
.groove { margin: 11px 0 7px; height: 3px; border-top: 2px solid #a0a0a0; }
.sun { display: flex; align-items: center; gap: 10px; height: 24px; margin: 16px 0 0 120px; }
.sun + .groove { margin: 17px 0 0; }
.show { padding-top: 12px; font-size: 20px; }
.faded { margin-top: 5px; color: #999; }
.faded input:checked::before { background: #999; }

.watermark { position: absolute; left: 2058px; bottom: 25px; display: flex; align-items: center; pointer-events: none; }
.watermark svg { width: 100px; height: 84px; }
.watermark span { margin-left: 4px; font-size: 59px; line-height: 70px; font-weight: 400; color: #fff; text-shadow: 2px 2px 1px #555; }

/* status bar */
.status { display: flex; align-items: center; font: 400 27px/34px "Noto Sans", "Noto Sans CJK SC", sans-serif; overflow: hidden; padding-top: 4px; }
.user { width: 14px; height: 30px; flex: none; }
.hint { flex: 1; margin-left: 11px; padding-left: 9px; border-left: 1px solid #888; line-height: 30px; white-space: nowrap; }
.status label { border-left: 1px solid #888; padding-left: 10px; line-height: 30px; }
.status input { width: 218px; height: 25px; margin-left: 9px; padding: 0 4px; border: 1px solid #a3b8d8; background: #ffffe1; font-size: 24px; line-height: 24px; }
```
